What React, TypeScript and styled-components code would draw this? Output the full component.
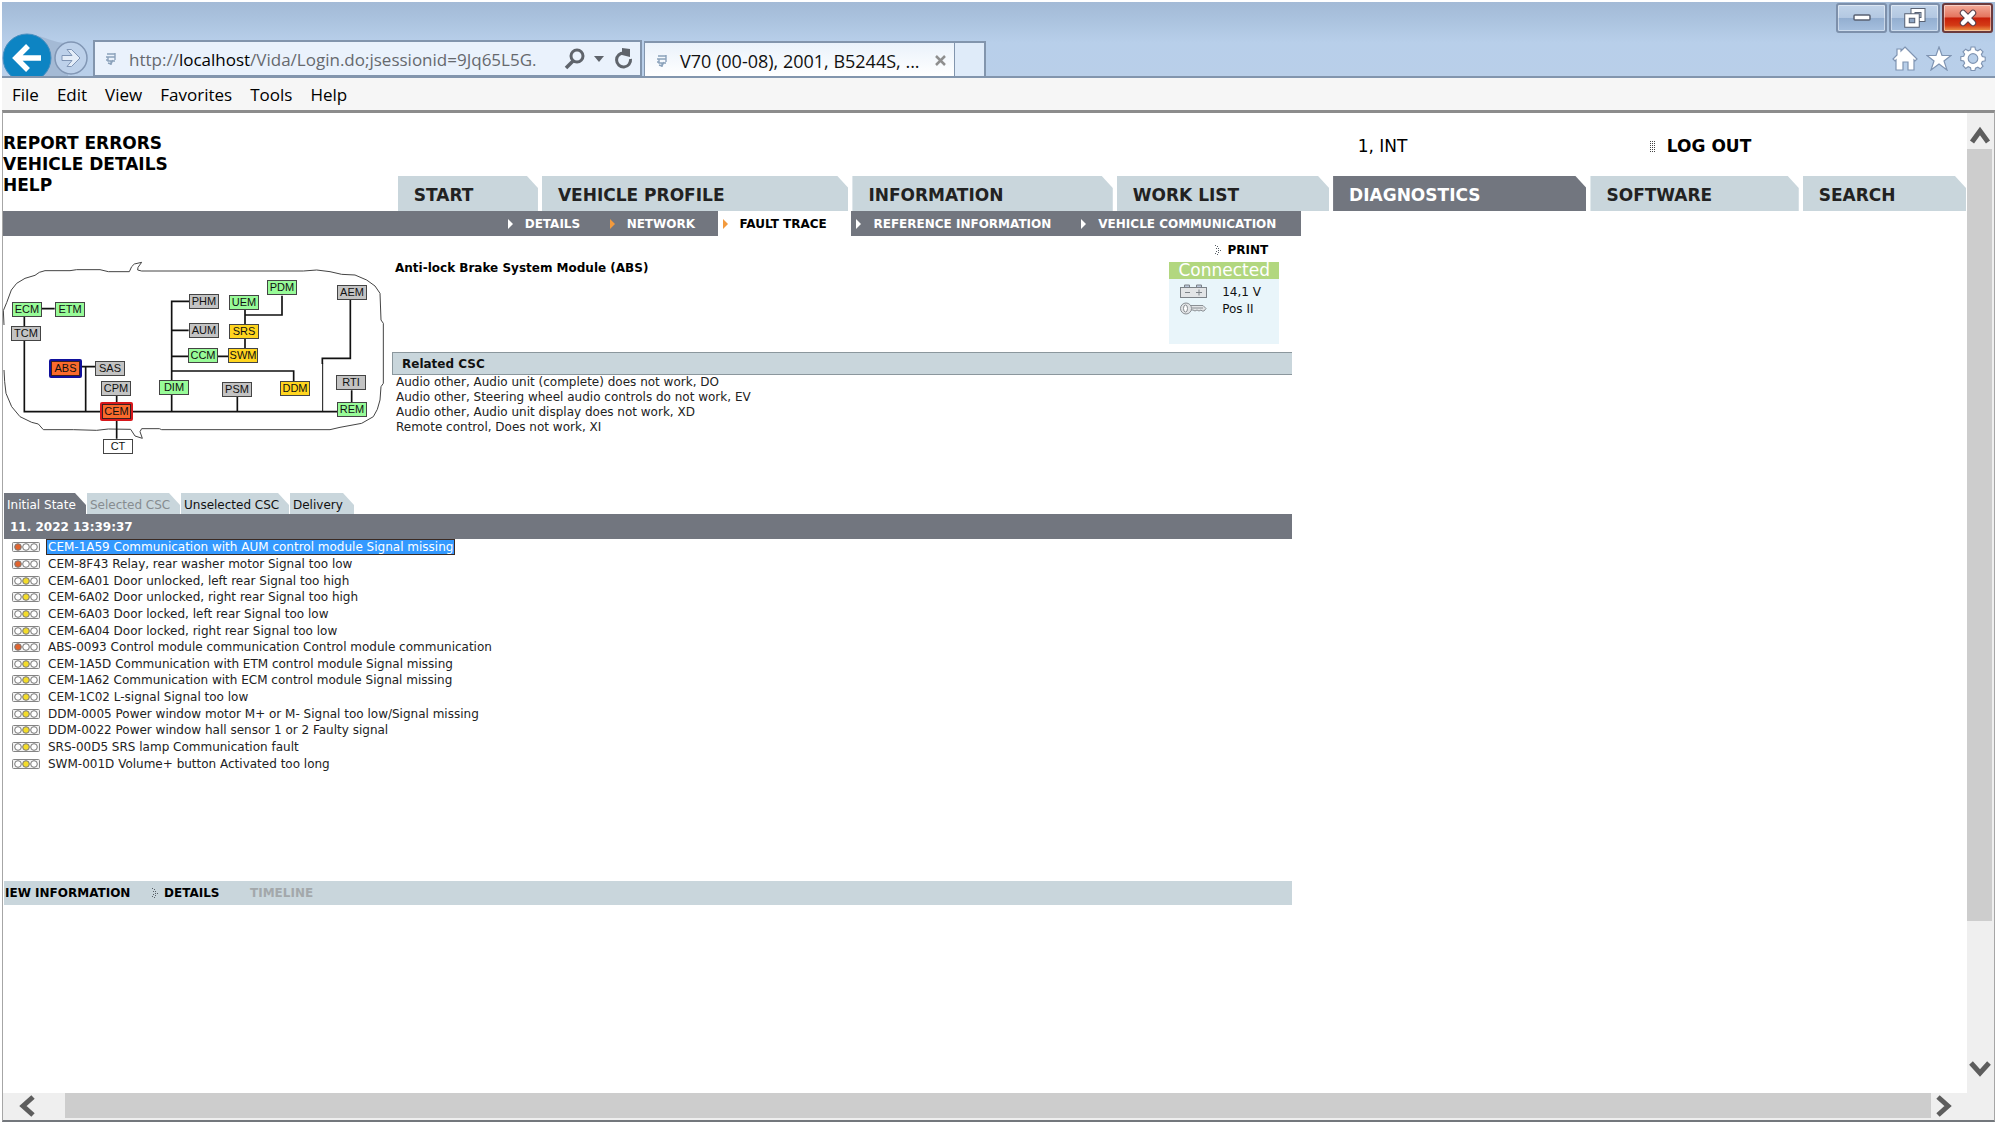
import React from 'react';
import styled, { createGlobalStyle, css } from 'styled-components';

const ui = '"Segoe UI", "Open Sans", "Noto Sans", sans-serif';
const vida = 'Verdana, "DejaVu Sans", sans-serif';
const slate = '#72767f';
const mist = '#c9d6dc';

const GlobalStyle = createGlobalStyle`
  *, *::before, *::after { box-sizing: border-box; }
  html, body { margin: 0; padding: 0; background: #fff; }
  button, input { font: inherit; color: inherit; border: 0; padding: 0; margin: 0; background: none; }
  a { color: inherit; text-decoration: none; }
  ul { list-style: none; margin: 0; padding: 0; }
  h1, h2, p { margin: 0; font-size: inherit; }
  svg { display: block; flex: none; }
`;

const Window = styled.div`
  display: flex;
  flex-direction: column;
  height: 100vh;
  padding: 2px;
  overflow: hidden;
  font-family: ${vida};
  font-size: 12px;
  color: #111;
`;

/* ---------- browser chrome ---------- */
const TitleArea = styled.header`
  display: flex;
  align-items: flex-end;
  flex: none;
  height: 76px;
  background: linear-gradient(#a3bad6, #a9c1dd 20%, #b8cfea 55%, #b9cfe9);
  border-bottom: 2px solid #8295ad;
  font-family: ${ui};
`;
const NavButtons = styled.div`
  display: flex;
  align-items: flex-end;
  width: 91px;
  height: 100%;
`;
const NavButton = styled.button`
  display: block;
  width: 100%;
`;
const AddressBox = styled.div`
  display: flex;
  align-items: center;
  gap: 12px;
  width: 549px;
  height: 36px;
  padding: 0 6px 0 10px;
  background: #eaf2fc;
  border: 2px solid #8295ad;
  border-bottom-width: 1px;
`;
const AddressField = styled.div`
  display: flex;
  flex: 1;
  align-items: center;
  min-width: 0;
  padding-top: 2px;
  color: #66696e;
  font-size: 17px;
  line-height: 28px;
`;
const Host = styled.span`
  color: #000;
`;
const AddressInput = styled.input`
  flex: 1;
  min-width: 0;
  height: 28px;
  outline: 0;
`;
const AddressTools = styled.div`
  display: flex;
  align-items: center;
  gap: 8px;
`;
const BrowserTab = styled.div`
  display: flex;
  align-items: center;
  width: 311px;
  height: 35px;
  margin-left: 2px;
  padding: 2px 8px 0 11px;
  gap: 12px;
  background: linear-gradient(#eaf2fb, #fff);
  border: 2px solid #8295ad;
  border-width: 2px 1px 0 1px;
  font-size: 18px;
  color: #111;
  white-space: nowrap;
`;
const TabTitle = styled.span`
  flex: 1;
  min-width: 0;
`;
const NewTab = styled.button`
  width: 31px;
  height: 35px;
  background: #dfebf9;
  border: 2px solid #8295ad;
  border-width: 2px 2px 0 0;
`;
const ChromeRight = styled.div`
  display: flex;
  flex-direction: column;
  align-items: flex-end;
  justify-content: space-between;
  height: 100%;
  margin-left: auto;
  padding: 1px 2px 5px 0;
`;
const Row = styled.div<{ $gap: number; $right?: number }>`
  display: flex;
  align-items: center;
  gap: ${p => p.$gap}px;
  padding-right: ${p => p.$right ?? 0}px;
`;
const CaptionButton = styled.button<{ $close?: boolean }>`
  display: flex;
  align-items: center;
  justify-content: center;
  width: 51px;
  height: 30px;
  border: 2px solid ${p => (p.$close ? '#6b3a3c' : '#7d90ab')};
  border-radius: 3px;
  box-shadow: inset 0 0 0 1px rgba(255, 255, 255, 0.45);
  background: ${p =>
    p.$close
      ? 'linear-gradient(#f4ab98, #e4745e 46%, #c8200a 50%, #d43a16 78%, #ee9a4a)'
      : 'linear-gradient(#c2d4e9, #b3c8e2 48%, #93aed0 50%, #a6c0df)'};
`;
const MenuBar = styled.nav`
  display: flex;
  align-items: center;
  gap: 18px;
  flex: none;
  height: 32px;
  padding: 2px 10px 0;
  background: #f6f6f6;
  font-family: ${ui};
  font-size: 17px;
  line-height: 24px;
  color: #000;
`;

/* ---------- viewport and scroll bars ---------- */
const Viewport = styled.div`
  display: grid;
  flex: 1;
  min-height: 0;
  grid-template-columns: minmax(0, 1fr) 27px;
  grid-template-rows: minmax(0, 1fr) 27px;
  border: 1px solid #a6a6a6;
  border-top: 3px solid #8c8c8c;
  border-bottom: 2px solid #73777c;
`;
const Page = styled.main`
  min-width: 0;
  overflow: hidden;
  background: #fff;
`;
const VTrack = styled.div`
  display: flex;
  flex-direction: column;
  padding-right: 2px;
  background: #efefef;
`;
const HTrack = styled.div`
  display: flex;
  padding-bottom: 2px;
  background: #efefef;
`;
const ScrollArrow = styled.button<{ $dir: 'up' | 'down' | 'left' | 'right' }>`
  display: flex;
  flex: none;
  align-items: center;
  justify-content: center;
  ${p => p.$dir === 'up' && 'height: 36px; padding-top: 12px;'}
  ${p => p.$dir === 'down' && 'height: 37px; padding-bottom: 12px;'}
  ${p => p.$dir === 'left' && 'width: 62px; padding-right: 12px;'}
  ${p => p.$dir === 'right' && 'width: 36px; padding-right: 12px;'}
`;
const VThumb = styled.div`
  flex: 772;
  background: #cdcdcd;
`;
const VGap = styled.div`
  flex: 135;
`;
const HThumb = styled.div`
  flex: 1;
  background: #cdcdcd;
`;
const Corner = styled.div`
  background: #efefef;
`;

/* ---------- VIDA header ---------- */
const TopRow = styled.div`
  display: grid;
  grid-template-columns: 1354fr 292fr 317fr;
  height: 63px;
  font-size: 17px;
  line-height: 21px;
  color: #000;
`;
const SideLinks = styled.div`
  display: flex;
  flex-direction: column;
  align-items: flex-start;
  margin-top: 20px;
  font-weight: 700;
  white-space: nowrap;
`;
const SideCap = styled.div`
  height: 63px;
  overflow: visible;
`;
const TopCell = styled.div`
  display: flex;
  align-items: center;
  gap: 11px;
  height: 21px;
  margin-top: 23px;
  a { font-weight: 700; }
`;
const MainTabs = styled.nav`
  display: grid;
  grid-template-columns: 140fr 306fr 260fr 212fr 253fr 208fr 163fr;
  gap: 4px;
  padding: 0 1px 0 20.1%;
  height: 35px;
`;
const cut = css`
  clip-path: polygon(0 0, calc(100% - 11px) 0, 100% 12px, 100% 100%, 0 100%);
`;
const MainTab = styled.a<{ $active?: boolean }>`
  ${cut}
  display: flex;
  align-items: center;
  padding: 3px 0 0 16px;
  background: ${p => (p.$active ? slate : mist)};
  color: ${p => (p.$active ? '#fff' : '#222')};
  font-size: 17px;
  font-weight: 700;
  white-space: nowrap;
`;
const Work = styled.div`
  width: 66.1%;
`;
const SubNav = styled.nav`
  display: grid;
  grid-template-columns: 505fr 102fr 108fr 134fr 225fr 225fr;
  height: 25px;
  background: ${slate};
`;
const SubLink = styled.a<{ $active?: boolean; $pad?: number }>`
  display: flex;
  align-items: center;
  gap: 12px;
  padding-left: ${p => p.$pad ?? 0}px;
  background: ${p => (p.$active ? '#fff' : 'transparent')};
  color: ${p => (p.$active ? '#000' : '#fff')};
  font-size: 12px;
  font-weight: 700;
  white-space: nowrap;
`;

/* ---------- overview ---------- */
const Overview = styled.section`
  display: grid;
  grid-template-columns: 389px minmax(0, 1fr);
  margin-right: 9px;
  height: 257px;
`;
const Canvas = styled.div`
  position: relative;
  width: 384px;
  height: 230px;
  margin-top: 4px;
`;
type Tone = 'ok' | 'idle' | 'warn' | 'bad' | 'none';
const tones: Record<Tone, string> = { ok: '#98fb98', idle: '#c3c3c3', warn: '#ffd51f', bad: '#fa6a2c', none: '#fff' };
const Node = styled.button<{ $x: number; $y: number; $tone: Tone; $ring?: string }>`
  position: absolute;
  left: ${p => p.$x}px;
  top: ${p => p.$y}px;
  width: ${p => (p.$ring ? 33 : 30)}px;
  height: ${p => (p.$ring ? 19 : 15)}px;
  border: ${p => (p.$ring ? `2px solid ${p.$ring}` : '1px solid #444')};
  border-radius: ${p => (p.$ring ? 2 : 0)}px;
  box-shadow: ${p => (p.$ring ? 'inset 0 0 0 1px #3a2020' : 'none')};
  background: ${p => tones[p.$tone]};
  color: #111;
  font-family: "Liberation Sans", Arial, sans-serif;
  font-size: 11px;
  line-height: 13px;
  text-align: center;
  white-space: nowrap;
`;
const Info = styled.div`
  display: flex;
  flex-direction: column;
`;
const InfoTop = styled.div`
  display: flex;
  justify-content: space-between;
  height: 116px;
  padding: 5px 13px 0 3px;
`;
const ModuleName = styled.h1`
  margin-top: 19px;
  font-size: 12px;
  line-height: 16px;
  color: #000;
`;
const StatusColumn = styled.div`
  width: 110px;
`;
const Print = styled.a`
  display: flex;
  align-items: center;
  justify-content: flex-end;
  gap: 5px;
  height: 17px;
  margin-bottom: 4px;
  padding-right: 11px;
  font-size: 12px;
  font-weight: 700;
  color: #000;
`;
const Connected = styled.div`
  height: 17px;
  background: #b2d77f;
  color: #fff;
  font-size: 17px;
  line-height: 17px;
  text-align: center;
`;
const StatusBody = styled.div`
  height: 65px;
  padding: 4px 0 0 11px;
  background: #e9f5fa;
  font-size: 12px;
`;
const StatusLine = styled.div`
  display: flex;
  align-items: center;
  gap: 15px;
  height: 17px;
`;
const RelatedHead = styled.h2`
  height: 23px;
  padding-left: 9px;
  border: 1px solid #8b979d;
  border-right: 0;
  background: ${mist};
  font-size: 12px;
  line-height: 22px;
`;
const RelatedList = styled.ul`
  padding-left: 4px;
  font-size: 12px;
  line-height: 15px;
  color: #222;
`;

/* ---------- fault list ---------- */
const Faults = styled.section`
  height: 388px;
  margin: 0 9px 0 1px;
`;
const StateTabs = styled.div`
  display: flex;
  gap: 1px;
  height: 21px;
`;
const StateTab = styled.button<{ $active?: boolean; $dim?: boolean; $w: number }>`
  ${cut}
  width: ${p => p.$w}px;
  padding: 2px 0 0 3px;
  text-align: left;
  white-space: nowrap;
  font-size: 12px;
  background: ${p => (p.$active ? slate : mist)};
  color: ${p => (p.$active ? '#fff' : p.$dim ? '#868c90' : '#111')};
`;
const DateBar = styled.div`
  height: 25px;
  padding-left: 6px;
  background: ${slate};
  color: #fff;
  font-size: 12px;
  font-weight: 700;
  line-height: 26px;
`;
const FaultList = styled.ul`
  display: grid;
  grid-auto-rows: 1fr;
  height: 233px;
`;
const FaultRow = styled.li`
  display: flex;
  align-items: center;
  gap: 6px;
  padding-left: 8px;
`;
const FaultLink = styled.a<{ $selected?: boolean }>`
  height: 16px;
  padding: 0 1px;
  border: 1px solid ${p => (p.$selected ? '#3a2a22' : 'transparent')};
  background: ${p => (p.$selected ? '#3399ff' : 'transparent')};
  color: ${p => (p.$selected ? '#fff' : '#222')};
  font-size: 12px;
  line-height: 14px;
  white-space: nowrap;
`;
const ActionBar = styled.div`
  display: flex;
  align-items: center;
  height: 24px;
  margin: 0 9px 0 1px;
  padding-left: 1px;
  background: ${mist};
  color: #000;
  font-size: 12px;
  font-weight: 700;
`;
const Action = styled.button<{ $w?: number; $muted?: boolean }>`
  display: flex;
  align-items: center;
  gap: 5px;
  width: ${p => (p.$w ? p.$w + 'px' : 'auto')};
  white-space: nowrap;
  color: ${p => (p.$muted ? '#a3a8ab' : '#000')};
`;

/* ---------- drawings ---------- */
const BackForward = () => (
  <svg width="89" height="45" viewBox="0 0 89 45">
    <path d="M30 4C44 5 52 13 68 12L66 45H40Z" fill="#9fb4cf" opacity=".8" />
    <circle cx="25" cy="27" r="24" fill="#0d84c3" stroke="#4a8fc0" />
    <path d="M39 27H14M26 15L14 27l12 12" fill="none" stroke="#fff" strokeWidth="5.500" />
    <circle cx="69" cy="27" r="16" fill="#bdd1ea" stroke="#8196b4" strokeWidth="1.500" />
    <path d="M60 24.500h10l-5-6h4.500l8.500 8.500-8.500 8.500H65l5-6H60z" fill="#e4edf8" stroke="#7f95b5" />
  </svg>
);
const Fav = () => (
  <svg width="12" height="14" viewBox="0 0 12 14" aria-hidden="true" fill="none" stroke="#8ba2bb" strokeWidth="1.400">
    <path d="M2 2h8M10 1v7M1 5h9M3 5v4h7M6 9v4M1 8h2M8 8l-2 4M3 11l3 1" />
  </svg>
);
const chevrons = {
  up: 'M3 16L11 5l8 11',
  down: 'M2 5l9 10 9-10',
  left: 'M16 2L6 11l10 9',
  right: 'M6 2l10 9-10 9',
};
const Chevron = ({ dir }: { dir: keyof typeof chevrons }) => (
  <svg width="22" height="22" viewBox="0 0 22 22">
    <path d={chevrons[dir]} fill="none" stroke="#5d5d5d" strokeWidth="5" />
  </svg>
);
const Tri = ({ color }: { color: string }) => (
  <svg width="5" height="10" viewBox="0 0 5 10" aria-hidden="true">
    <path d="M0 0l5 5-5 5z" fill={color} />
  </svg>
);
const DotArrow = () => (
  <svg width="7" height="10" viewBox="0 0 7 10" aria-hidden="true" fill="#565d64">
    <path d="M0 0h1v1H0zM2 1h1v1H2zM1 3h1v1H1zM3 3h1v1H3zM3 5h1v1H3zM5 5h1v1H5zM1 6h1v1H1zM3 7h1v1H3zM0 8h1v1H0zM2 9h1v1H2z" />
  </svg>
);
const DotGrid = () => (
  <svg width="6" height="12" viewBox="0 0 6 12" aria-hidden="true" fill="#444">
    {[0, 2, 4, 6, 8, 10].map(y => (
      <path key={y} d={`M0 ${y}h1v1H0zM2 ${y}h1v1H2zM4 ${y}h1v1H4z`} />
    ))}
  </svg>
);
const Lamp = ({ level }: { level: 'red' | 'yellow' }) => (
  <svg width="28" height="10" viewBox="0 0 28 10" role="img" aria-label={level}>
    <rect x=".5" y=".5" width="27" height="9" rx="1" fill="#f2f2f2" stroke="#858585" />
    <circle cx="6" cy="5" r="3.300" fill={level === 'red' ? '#e0632e' : '#fff'} stroke="#777" />
    <circle cx="14" cy="5" r="3.300" fill={level === 'yellow' ? '#f3dc2a' : '#fff'} stroke="#777" />
    <circle cx="22" cy="5" r="3.300" fill="#fff" stroke="#777" />
  </svg>
);
const Battery = () => (
  <svg width="27" height="15" viewBox="0 0 27 15" aria-hidden="true" stroke="#7c8288">
    <path d="M4.500 3V1h5v2M16.500 3V1h5v2" fill="#bcc8dc" />
    <rect x=".5" y="3.500" width="26" height="10" fill="#e2e4e6" />
    <path d="M5 8.500h5M16 8.500h6M19 5.500v6" />
  </svg>
);
const Key = () => (
  <svg width="27" height="15" viewBox="0 0 27 15" aria-hidden="true" stroke="#8a8f94" fill="#e2e4e6">
    <path d="M10 4.500h13l3 3-2 2.500h-2l-1-1-2 1-2-1-2 1-2-1h-3z" />
    <circle cx="6" cy="7.500" r="5.500" />
    <ellipse cx="5.500" cy="7.500" rx="2" ry="3.500" fill="#fff" />
    <path d="M12 7h11" />
  </svg>
);
const Wiring = () => (
  <svg width="384" height="230" viewBox="9 0 1152 690" aria-hidden="true" fill="none" stroke="#111">
    <path
      strokeWidth="3"
      stroke="#444"
      d="M12 255L10 212 20 188 34 150 50 130 75 115 105 106 118 97 135 92H210L230 89H300L325 95H388L395 80 403 72 425 67 414 82 413 90 425 93H910L950 90 990 95 1025 103 1065 105 1100 120 1125 138 1140 160 1143 240 1150 250V430L1143 440 1140 480 1132 508 1120 530 1085 550 1020 562 990 569H485L478 566H425L420 575 427 595 405 588 392 568 325 567 290 571 220 569H130L115 552 95 547 60 530 35 500 18 460 14 425 12 390"
    />
    <path
      strokeWidth="5"
      d="M126 206H164M73 230V515H1012M246 380H285M257 380V515M350 466V596M567 184H515V515M515 271H566M515 349H684M515 393H881V424M735 207V325M846 167V225H735M712 470V515M1051 177V355H967V372M1055 451V487"
    />
    <path strokeWidth="3" d="M968 370V515" />
  </svg>
);

type N = [string, number, number, Tone, string?];
const nodes: N[] = [
  ['ECM', 9, 62, 'ok'], ['ETM', 52, 62, 'ok'], ['TCM', 8, 86, 'idle'],
  ['ABS', 46, 119, 'bad', '#10109c'], ['SAS', 92, 121, 'idle'], ['CPM', 98, 141, 'idle'],
  ['CEM', 97, 162, 'bad', '#d8181c'], ['CT', 100, 199, 'none'],
  ['PHM', 186, 54, 'idle'], ['AUM', 186, 83, 'idle'], ['CCM', 185, 108, 'ok'],
  ['UEM', 226, 55, 'ok'], ['PDM', 264, 40, 'ok'], ['SRS', 226, 84, 'warn'], ['SWM', 225, 108, 'warn'],
  ['AEM', 334, 45, 'idle'], ['DIM', 156, 140, 'ok'], ['PSM', 219, 142, 'idle'],
  ['DDM', 277, 141, 'warn'], ['RTI', 333, 135, 'idle'], ['REM', 334, 162, 'ok'],
];
const faults: [string, 'red' | 'yellow'][] = [
  ['CEM-1A59 Communication with AUM control module Signal missing', 'red'],
  ['CEM-8F43 Relay, rear washer motor Signal too low', 'red'],
  ['CEM-6A01 Door unlocked, left rear Signal too high', 'yellow'],
  ['CEM-6A02 Door unlocked, right rear Signal too high', 'yellow'],
  ['CEM-6A03 Door locked, left rear Signal too low', 'yellow'],
  ['CEM-6A04 Door locked, right rear Signal too low', 'yellow'],
  ['ABS-0093 Control module communication Control module communication', 'red'],
  ['CEM-1A5D Communication with ETM control module Signal missing', 'yellow'],
  ['CEM-1A62 Communication with ECM control module Signal missing', 'yellow'],
  ['CEM-1C02 L-signal Signal too low', 'yellow'],
  ['DDM-0005 Power window motor M+ or M- Signal too low/Signal missing', 'yellow'],
  ['DDM-0022 Power window hall sensor 1 or 2 Faulty signal', 'yellow'],
  ['SRS-00D5 SRS lamp Communication fault', 'yellow'],
  ['SWM-001D Volume+ button Activated too long', 'yellow'],
];

export default function App() {
  return (
    <Window>
      <GlobalStyle />
      <TitleArea>
        <NavButtons>
          <NavButton aria-label="Back and forward"><BackForward /></NavButton>
        </NavButtons>
        <AddressBox>
          <Fav />
          <AddressField>
            <label htmlFor="address">http://<Host>localhost</Host></label>
            <AddressInput id="address" defaultValue="/Vida/Login.do;jsessionid=9Jq65L5G." />
          </AddressField>
          <AddressTools>
            <svg width="22" height="22" viewBox="0 0 22 22" fill="none" stroke="#5f646b" strokeWidth="3"><circle cx="13" cy="8" r="6" /><path d="M9 13l-7 7" strokeWidth="3.500" /></svg>
            <svg width="10" height="6" viewBox="0 0 10 6"><path d="M0 0h10L5 6z" fill="#5f646b" /></svg>
            <svg width="22" height="22" viewBox="0 0 22 22" fill="none" stroke="#5f646b" strokeWidth="3"><path d="M12 5a7 7 0 1 0 6.500 6" /><path d="M10 0l8 1v8l-8-2z" fill="#5f646b" stroke="none" /></svg>
          </AddressTools>
        </AddressBox>
        <BrowserTab>
          <Fav />
          <TabTitle>V70 (00-08), 2001, B5244S, ...</TabTitle>
          <svg width="11" height="11" viewBox="0 0 11 11" stroke="#8f8f8f" strokeWidth="2.500"><path d="M1 1l9 9M10 1l-9 9" /></svg>
        </BrowserTab>
        <NewTab aria-label="New tab" />
        <ChromeRight>
          <Row $gap={2}>
            <CaptionButton aria-label="Minimize">
              <svg width="18" height="8" viewBox="0 0 18 8"><rect x="1" y="1" width="16" height="5" rx="1" fill="#fff" stroke="#596273" strokeWidth="1.500" /></svg>
            </CaptionButton>
            <CaptionButton aria-label="Restore">
              <svg width="22" height="20" viewBox="0 0 22 20" fill="none"><path d="M9 2.500h10v9H9z" stroke="#596273" strokeWidth="5" /><path d="M9 2.500h10v9H9z" stroke="#fff" strokeWidth="3" /><path d="M3 8h10v9H3z" fill="#8fa6c4" stroke="#596273" strokeWidth="5.500" /><path d="M3 8h10v9H3z" stroke="#fff" strokeWidth="3.500" /></svg>
            </CaptionButton>
            <CaptionButton $close aria-label="Close">
              <svg width="20" height="18" viewBox="0 0 20 18" strokeLinecap="round"><path d="M5 4l10 10M15 4L5 14" stroke="#59404a" strokeWidth="6.500" /><path d="M5 4l10 10M15 4L5 14" stroke="#fff" strokeWidth="4.500" /></svg>
            </CaptionButton>
          </Row>
          <Row $gap={8} $right={7}>
            <svg width="26" height="25" viewBox="0 0 26 25" fill="#fff" stroke="#7f94b2" strokeWidth="1.200"><path d="M13 1l12 12-2 2-1-1v10h-6v-8h-5v8H4V14l-1 1-2-2 4-4V3h4v2z" /></svg>
            <svg width="26" height="25" viewBox="0 0 26 25" fill="#fff" stroke="#7f94b2" strokeWidth="1.200"><path d="M13 1l3 8.500h9l-7 5.500 3 9-8-6-8 6 3-9-7-5.500h9z" /></svg>
            <svg width="26" height="25" viewBox="0 0 26 26" fill="#fff" stroke="#7f94b2" strokeWidth="1.200"><path fillRule="evenodd" d="M11 1h4l.6 3 2.400 1 2.600-1.700 2.800 2.800L21.700 8.700l1 2.300 3 .6v3.800l-3 .6-1 2.300 1.700 2.600-2.800 2.800-2.600-1.700-2.400 1L15 25.500h-4l-.6-2.900-2.400-1-2.600 1.700-2.800-2.800 1.700-2.600-1-2.300-3-.6v-3.800l3-.6 1-2.300L2.600 6.100l2.800-2.800L8 5l2.400-1zM13 8a5 5 0 1 0 0 10 5 5 0 0 0 0-10z" /></svg>
          </Row>
        </ChromeRight>
      </TitleArea>
      <MenuBar aria-label="Menu">
        {['File', 'Edit', 'View', 'Favorites', 'Tools', 'Help'].map(m => <button key={m}>{m}</button>)}
      </MenuBar>
      <Viewport>
        <Page>
          <TopRow>
            <SideCap>
              <SideLinks>
                <a href="#report">REPORT ERRORS</a>
                <a href="#vehicle">VEHICLE DETAILS</a>
                <a href="#help">HELP</a>
              </SideLinks>
            </SideCap>
            <TopCell>1, INT</TopCell>
            <TopCell><DotGrid /><a href="#logout">LOG OUT</a></TopCell>
          </TopRow>
          <MainTabs>
            {['START', 'VEHICLE PROFILE', 'INFORMATION', 'WORK LIST', 'DIAGNOSTICS', 'SOFTWARE', 'SEARCH'].map(t => (
              <MainTab key={t} href="#tab" $active={t === 'DIAGNOSTICS'}>{t}</MainTab>
            ))}
          </MainTabs>
          <Work>
            <SubNav>
              <span />
              <SubLink href="#details"><Tri color="#fff" />DETAILS</SubLink>
              <SubLink href="#network"><Tri color="#f39a3d" />NETWORK</SubLink>
              <SubLink href="#trace" $active $pad={5}><Tri color="#f39a3d" />FAULT TRACE</SubLink>
              <SubLink href="#reference" $pad={5}><Tri color="#fff" />REFERENCE INFORMATION</SubLink>
              <SubLink href="#communication" $pad={5}><Tri color="#fff" />VEHICLE COMMUNICATION</SubLink>
            </SubNav>
            <Overview>
              <Canvas>
                <Wiring />
                {nodes.map(([name, x, y, tone, ring]) => (
                  <Node key={name} $x={x} $y={y} $tone={tone} $ring={ring}>{name}</Node>
                ))}
              </Canvas>
              <Info>
                <InfoTop>
                  <ModuleName>Anti-lock Brake System Module (ABS)</ModuleName>
                  <StatusColumn>
                    <Print href="#print"><DotArrow />PRINT</Print>
                    <Connected>Connected</Connected>
                    <StatusBody>
                      <StatusLine><Battery />14,1 V</StatusLine>
                      <StatusLine><Key />Pos II</StatusLine>
                    </StatusBody>
                  </StatusColumn>
                </InfoTop>
                <RelatedHead>Related CSC</RelatedHead>
                <RelatedList>
                  <li>Audio other, Audio unit (complete) does not work, DO</li>
                  <li>Audio other, Steering wheel audio controls do not work, EV</li>
                  <li>Audio other, Audio unit display does not work, XD</li>
                  <li>Remote control, Does not work, XI</li>
                </RelatedList>
              </Info>
            </Overview>
            <Faults>
              <StateTabs>
                <StateTab $w={82} $active>Initial State</StateTab>
                <StateTab $w={93} $dim>Selected CSC</StateTab>
                <StateTab $w={108}>Unselected CSC</StateTab>
                <StateTab $w={64}>Delivery</StateTab>
              </StateTabs>
              <DateBar>11. 2022 13:39:37</DateBar>
              <FaultList>
                {faults.map(([text, level], i) => (
                  <FaultRow key={text}><Lamp level={level} /><FaultLink href="#fault" $selected={i === 0}>{text}</FaultLink></FaultRow>
                ))}
              </FaultList>
            </Faults>
            <ActionBar>
              <Action $w={147}>IEW INFORMATION</Action>
              <Action $w={98}><DotArrow />DETAILS</Action>
              <Action $muted>TIMELINE</Action>
            </ActionBar>
          </Work>
        </Page>
        <VTrack>
          <ScrollArrow $dir="up" aria-label="Scroll up"><Chevron dir="up" /></ScrollArrow>
          <VThumb />
          <VGap />
          <ScrollArrow $dir="down" aria-label="Scroll down"><Chevron dir="down" /></ScrollArrow>
        </VTrack>
        <HTrack>
          <ScrollArrow $dir="left" aria-label="Scroll left"><Chevron dir="left" /></ScrollArrow>
          <HThumb />
          <ScrollArrow $dir="right" aria-label="Scroll right"><Chevron dir="right" /></ScrollArrow>
        </HTrack>
        <Corner />
      </Viewport>
    </Window>
  );
}
